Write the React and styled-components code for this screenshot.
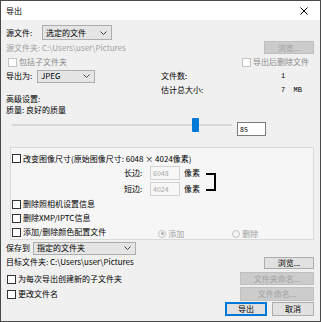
import React from "react";
import styled, { createGlobalStyle } from "styled-components";

const GlobalStyle = createGlobalStyle`
  html, body {
    margin: 0;
    padding: 0;
    background: #ffffff;
  }
  body {
    font-family: "Noto Sans CJK SC", "Noto Sans", sans-serif;
    font-size: 8px;
  }
`;

const Window = styled.div`
  width: 321px;
  height: 322px;
  box-sizing: border-box;
  border: 1px solid #4a4a4a;
  background: #f0f0f0;
  display: flex;
  flex-direction: column;
  color: #000;
  line-height: 1;
  overflow: hidden;
`;

const TitleBar = styled.div`
  height: 19px;
  flex: none;
  background: #fff;
  display: flex;
  align-items: center;
  justify-content: space-between;
  padding: 0 12px 0 5px;
`;

const Body = styled.div`
  padding: 5px 6px 0 5px;
  display: flex;
  flex-direction: column;
`;

const Row = styled.div`
  display: flex;
  align-items: center;
  height: ${(p) => p.h || 14}px;
  margin-top: ${(p) => p.mt || 0}px;
  padding-left: ${(p) => p.pl || 0}px;
  flex: none;
`;

const Label = styled.span`
  display: inline-block;
  width: ${(p) => (p.w ? `${p.w}px` : "auto")};
  color: ${(p) => (p.muted ? "#a0a0a0" : "#000")};
  white-space: nowrap;
  text-align: ${(p) => (p.right ? "right" : "left")};
`;

const Select = styled.div`
  width: ${(p) => p.w}px;
  height: ${(p) => p.h || 13}px;
  box-sizing: border-box;
  border: 1px solid #adadad;
  background: #e5e5e5;
  display: flex;
  align-items: center;
  justify-content: space-between;
  padding: 0 4px 0 3px;
  flex: none;
`;

const Button = styled.div`
  width: ${(p) => p.w}px;
  height: ${(p) => p.h || 13}px;
  box-sizing: border-box;
  border: 1px solid ${(p) => (p.primary ? "#0078d7" : p.disabled ? "#bfbfbf" : "#adadad")};
  box-shadow: ${(p) => (p.primary ? "inset 0 0 0 1px #0078d7" : "none")};
  background: ${(p) => (p.disabled ? "#cccccc" : "#e1e1e1")};
  color: ${(p) => (p.disabled ? "#a0a0a0" : "#000")};
  display: flex;
  align-items: center;
  justify-content: center;
  flex: none;
`;

const Box = styled.span`
  width: 9px;
  height: 9px;
  box-sizing: border-box;
  border: 1px solid ${(p) => (p.disabled ? "#c4c4c4" : "#333")};
  background: #fff;
  margin-right: 2px;
  flex: none;
`;

const CheckLabel = styled.label`
  display: flex;
  align-items: center;
  color: ${(p) => (p.disabled ? "#8a8a8a" : "#000")};
  margin-left: ${(p) => (p.auto ? "auto" : "0")};
  margin-right: ${(p) => p.mr || 0}px;
  white-space: nowrap;
`;

const Radio = styled.span`
  width: 8px;
  height: 8px;
  box-sizing: border-box;
  border-radius: 50%;
  border: 1px solid #c4c4c4;
  background: #f4f4f4;
  margin-right: 2px;
  display: flex;
  align-items: center;
  justify-content: center;
  &::after {
    content: "";
    width: 3px;
    height: 3px;
    border-radius: 50%;
    background: ${(p) => (p.checked ? "#b0b0b0" : "transparent")};
  }
`;

const RadioLabel = styled.label`
  display: flex;
  align-items: center;
  color: #a0a0a0;
  margin-left: ${(p) => p.ml}px;
  margin-top: 3px;
`;

const InfoGrid = styled.div`
  display: grid;
  grid-template-columns: 155px 1fr;
  margin-top: 0;
`;

const Column = styled.div`
  display: flex;
  flex-direction: column;
`;

const Line = styled.div`
  display: flex;
  align-items: center;
  height: ${(p) => p.h || 14}px;
  margin-top: ${(p) => p.mt || 0}px;
`;

const Mono = styled.span`
  font-family: "Liberation Mono", "DejaVu Sans Mono", monospace;
  font-size: 7px;
  white-space: pre;
`;

const SliderRow = styled.div`
  display: flex;
  align-items: flex-start;
  height: 18px;
  margin-top: 3px;
`;

const Slider = styled.div`
  position: relative;
  width: 220px;
  height: 14px;
  margin-left: 6px;
`;

const Track = styled.div`
  position: absolute;
  left: 0;
  right: 0;
  top: 6px;
  height: 2px;
  background: #d7d7d7;
`;

const Thumb = styled.div`
  position: absolute;
  top: 0;
  width: 7px;
  height: 14px;
  border-radius: 1px;
  background: #0078d7;
`;

const NumInput = styled.div`
  width: ${(p) => p.w}px;
  height: 14px;
  box-sizing: border-box;
  margin-left: ${(p) => p.ml || 0}px;
  margin-top: ${(p) => p.mt || 0}px;
  border: 1px solid ${(p) => (p.disabled ? "#d2d2d2" : "#7a7a7a")};
  background: ${(p) => (p.disabled ? "#f7f7f7" : "#fff")};
  color: ${(p) => (p.disabled ? "#a8a8a8" : "#000")};
  display: flex;
  align-items: center;
  padding-left: 2px;
  font-size: 7px;
  flex: none;
`;

const Panel = styled.div`
  margin: 11px 0 0 4px;
  border: 1px solid #d9d9d9;
  background: #f6f6f6;
  padding: 4px 0 0 1px;
  display: flex;
  flex-direction: column;
`;

const SizeBlock = styled.div`
  display: flex;
  align-items: flex-start;
`;

const SizeFields = styled.div`
  display: flex;
  flex-direction: column;
`;

const Bracket = styled.svg`
  margin: 8px 0 0 6px;
  flex: none;
`;

const BottomArea = styled.div`
  display: flex;
  align-items: flex-start;
`;

const ButtonColumn = styled.div`
  display: flex;
  flex-direction: column;
  align-items: flex-end;
  margin-top: 2px;
`;

const Footer = styled.div`
  display: flex;
  gap: 5px;
  margin-top: 1px;
`;

const Chevron = () => (
  <svg width="7" height="4" viewBox="0 0 7 4">
    <path d="M0.5 0.5 L3.5 3.5 L6.5 0.5" fill="none" stroke="#444" strokeWidth="1" />
  </svg>
);

const Check = ({ children, disabled, auto, mr }) => (
  <CheckLabel disabled={disabled} auto={auto} mr={mr}>
    <Box disabled={disabled} />
    {children}
  </CheckLabel>
);

export default function App() {
  return (
    <>
      <GlobalStyle />
      <Window>
        <TitleBar>
          <span>导出</span>
          <svg width="8" height="8" viewBox="0 0 8 8">
            <path d="M0.5 0.5 L7.5 7.5 M7.5 0.5 L0.5 7.5" stroke="#000" strokeWidth="1" />
          </svg>
        </TitleBar>
        <Body>
          <Row h={15}>
            <Label w={36}>源文件:</Label>
            <Select w={70} h={15}>
              <span>选定的文件</span>
              <Chevron />
            </Select>
          </Row>
          <Row h={15}>
            <Label muted>源文件夹: C:\Users\user\Pictures</Label>
            <Button w={50} disabled style={{ marginLeft: "auto" }}>
              浏览...
            </Button>
          </Row>
          <Row h={14} pl={2}>
            <Check disabled>包括子文件夹</Check>
            <Check disabled auto mr={5}>
              导出后删除文件
            </Check>
          </Row>
          <InfoGrid>
            <Column>
              <Line h={14}>
                <Label w={31}>导出为:</Label>
                <Select w={58}>
                  <span>JPEG</span>
                  <Chevron />
                </Select>
              </Line>
              <Line h={10} mt={11}>
                高级设置:
              </Line>
              <Line h={11}>质量: 良好的质量</Line>
            </Column>
            <Column>
              <Line h={14}>
                <Label w={120}>文件数:</Label>
                <Mono>1</Mono>
              </Line>
              <Line h={14}>
                <Label w={120}>估计总大小:</Label>
                <Mono>7  MB</Mono>
              </Line>
            </Column>
          </InfoGrid>
          <SliderRow>
            <Slider>
              <Track />
              <Thumb style={{ left: `${(85 / 100) * 212}px` }} />
            </Slider>
            <NumInput w={29} ml={5} mt={4}>
              85
            </NumInput>
          </SliderRow>
          <Panel>
            <Row h={13}>
              <Check>改变图像尺寸(原始图像尺寸: 6048 × 4024像素)</Check>
            </Row>
            <SizeBlock>
              <SizeFields>
                <Row h={16}>
                  <Label w={22} style={{ marginLeft: 112 }}>
                    长边:
                  </Label>
                  <NumInput w={30} ml={4} disabled>
                    6048
                  </NumInput>
                  <Label style={{ marginLeft: 4 }}>像素</Label>
                </Row>
                <Row h={16}>
                  <Label w={22} style={{ marginLeft: 112 }}>
                    短边:
                  </Label>
                  <NumInput w={30} ml={4} disabled>
                    4024
                  </NumInput>
                  <Label style={{ marginLeft: 4 }}>像素</Label>
                </Row>
              </SizeFields>
              <Bracket width="11" height="18" viewBox="0 0 11 18">
                <path d="M0 1 H9 V17 H0" fill="none" stroke="#000" strokeWidth="2" />
              </Bracket>
            </SizeBlock>
            <Row h={14}>
              <Check>删除照相机设置信息</Check>
            </Row>
            <Row h={14}>
              <Check>删除XMP/IPTC信息</Check>
            </Row>
            <Row h={14}>
              <Check>添加/删除颜色配置文件</Check>
              <RadioLabel ml={52}>
                <Radio checked />
                添加
              </RadioLabel>
              <RadioLabel ml={48}>
                <Radio />
                删除
              </RadioLabel>
            </Row>
          </Panel>
          <Row h={14} mt={1}>
            <Label w={27}>保存到</Label>
            <Select w={103}>
              <span>指定的文件夹</span>
              <Chevron />
            </Select>
          </Row>
          <BottomArea>
            <Column style={{ flex: 1 }}>
              <Line h={13}>目标文件夹: C:\Users\user\Pictures</Line>
              <Line h={14} mt={4} style={{ paddingLeft: 1 }}>
                <Check>为每次导出创建新的子文件夹</Check>
              </Line>
              <Line h={14} mt={1} style={{ paddingLeft: 1 }}>
                <Check>更改文件名</Check>
              </Line>
            </Column>
            <ButtonColumn>
              <Button w={50} h={12}>
                浏览...
              </Button>
              <Button w={74} h={13} disabled style={{ marginTop: 3 }}>
                文件夹命名...
              </Button>
              <Button w={74} h={14} disabled style={{ marginTop: 2 }}>
                文件命名...
              </Button>
              <Footer>
                <Button w={42} h={14} primary>
                  导出
                </Button>
                <Button w={42} h={14}>
                  取消
                </Button>
              </Footer>
            </ButtonColumn>
          </BottomArea>
        </Body>
      </Window>
    </>
  );
}
